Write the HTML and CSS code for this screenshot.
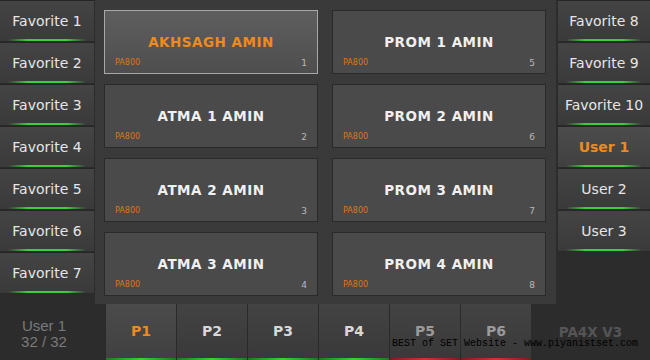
FILE: index.html
```html
<!DOCTYPE html>
<html lang="en">
  <head>
    <meta charset="UTF-8" />
    <title>Favorites</title>
    <link rel="stylesheet" href="styles.css">
  </head>
  <body>
    <div class="screen">
      <div class="side">
        <div class="side-btn">Favorite 1</div>
        <div class="side-btn">Favorite 2</div>
        <div class="side-btn">Favorite 3</div>
        <div class="side-btn">Favorite 4</div>
        <div class="side-btn">Favorite 5</div>
        <div class="side-btn">Favorite 6</div>
        <div class="side-btn">Favorite 7</div>
      </div>

      <div class="panel">
        <div class="card selected">
          <div class="title">AKHSAGH AMIN</div>
          <div class="card-foot"><span class="model">PA800</span><span class="num">1</span></div>
        </div>
        <div class="card">
          <div class="title">PROM 1 AMIN</div>
          <div class="card-foot"><span class="model">PA800</span><span class="num">5</span></div>
        </div>
        <div class="card">
          <div class="title">ATMA 1 AMIN</div>
          <div class="card-foot"><span class="model">PA800</span><span class="num">2</span></div>
        </div>
        <div class="card">
          <div class="title">PROM 2 AMIN</div>
          <div class="card-foot"><span class="model">PA800</span><span class="num">6</span></div>
        </div>
        <div class="card">
          <div class="title">ATMA 2 AMIN</div>
          <div class="card-foot"><span class="model">PA800</span><span class="num">3</span></div>
        </div>
        <div class="card">
          <div class="title">PROM 3 AMIN</div>
          <div class="card-foot"><span class="model">PA800</span><span class="num">7</span></div>
        </div>
        <div class="card">
          <div class="title">ATMA 3 AMIN</div>
          <div class="card-foot"><span class="model">PA800</span><span class="num">4</span></div>
        </div>
        <div class="card">
          <div class="title">PROM 4 AMIN</div>
          <div class="card-foot"><span class="model">PA800</span><span class="num">8</span></div>
        </div>
      </div>

      <div class="side right">
        <div class="side-btn">Favorite 8</div>
        <div class="side-btn">Favorite 9</div>
        <div class="side-btn">Favorite 10</div>
        <div class="side-btn active">User 1</div>
        <div class="side-btn">User 2</div>
        <div class="side-btn">User 3</div>
      </div>

      <div class="bottom">
        <div class="info">User 1<br>32 / 32</div>
        <div class="tabs">
          <div class="tab active">P1</div>
          <div class="tab">P2</div>
          <div class="tab">P3</div>
          <div class="tab">P4</div>
          <div class="tab dim red">P5</div>
          <div class="tab dim red">P6</div>
        </div>
        <div class="brand">PA4X V3</div>
        <div class="watermark">BEST of SET Website - www.piyanistset.com</div>
      </div>
    </div>
  </body>
</html>
```

FILE: styles.css
```css
body {
  margin: 0;
  padding: 0;
  background-color: #2b2b2b;
  font-family: "DejaVu Sans", Verdana, sans-serif;
}

.screen {
  width: 650px;
  height: 360px;
  display: grid;
  grid-template-columns: 94px 462px 94px;
  grid-template-rows: 304px 56px;
  background-color: #2c2c2c;
  overflow: hidden;
}

/* side favourite columns */
.side {
  display: flex;
  flex-direction: column;
}

.side.right {
  margin-left: 2px;
}

.side-btn {
  height: 40px;
  border-top: 1px solid #262626;
  border-bottom: 1px solid #2a2a2a;
  background: linear-gradient(#444444, #3a3a3a);
  color: #e6e6e6;
  font-size: 14px;
  display: flex;
  align-items: center;
  justify-content: center;
  position: relative;
}

.side-btn::after {
  content: "";
  position: absolute;
  left: 8px;
  right: 8px;
  bottom: 0;
  height: 2px;
  background: linear-gradient(90deg, rgba(40, 180, 40, 0), #3ccf3c 25%, #3ccf3c 75%, rgba(40, 180, 40, 0));
}

.side-btn.active {
  background: linear-gradient(#4c4c4c, #404040);
  color: #f08a1c;
  font-weight: bold;
}

/* centre panel */
.panel {
  margin-left: 1px;
  background-color: #3a3a3a;
  padding: 10px 9px 9px 9px;
  display: grid;
  grid-template-columns: 214px 214px;
  grid-template-rows: repeat(4, 64px);
  column-gap: 14px;
  row-gap: 10px;
}

.card {
  box-sizing: border-box;
  background-color: #4a4a4a;
  border: 1px solid #2a2a2a;
  display: flex;
  flex-direction: column;
  justify-content: flex-end;
  position: relative;
}

.card.selected {
  background: linear-gradient(#5e5e5e, #4e4e4e);
  border: 1px solid #a8a8a8;
}

.title {
  position: absolute;
  left: 0;
  right: 0;
  top: 23px;
  text-align: center;
  font-weight: bold;
  font-size: 13.5px;
  letter-spacing: 0.5px;
  color: #f0f0f0;
}

.selected .title {
  color: #f08a1c;
}

.card-foot {
  display: flex;
  justify-content: space-between;
  padding: 0 10px 5px 10px;
  font-size: 8px;
  line-height: 10px;
}

.model {
  color: #d8781a;
}

.num {
  color: #b8b8b8;
  font-size: 9px;
}

/* bottom bar */
.bottom {
  grid-column: 1 / 4;
  display: flex;
  position: relative;
  background-color: #2c2c2c;
}

.info {
  width: 88px;
  padding-top: 14px;
  color: #7a7a7a;
  font-family: "Liberation Sans", Arial, sans-serif;
  font-size: 15px;
  line-height: 16px;
  text-align: center;
  margin-right: 17px;
}

.tabs {
  display: flex;
}

.tab {
  width: 71px;
  background: linear-gradient(#434343, #393939);
  border-left: 1px solid #2a2a2a;
  color: #d8d8d8;
  font-weight: bold;
  font-size: 14px;
  display: flex;
  justify-content: center;
  padding-top: 19px;
  box-sizing: border-box;
  position: relative;
}

.tab::after {
  content: "";
  position: absolute;
  left: 0;
  right: 0;
  bottom: 0;
  height: 2px;
  background: linear-gradient(90deg, #1e7a1e, #3ccf3c 50%, #1e7a1e);
}

.tab.active {
  background: linear-gradient(#4b4b4b, #404040);
  color: #f08a1c;
}

.tab.dim {
  color: #9a9a9a;
}

.tab.red::after {
  background: linear-gradient(90deg, #7a1e1e, #d83030 50%, #7a1e1e);
}

.brand {
  flex: 1;
  color: #555555;
  font-weight: bold;
  font-size: 13.5px;
  text-align: center;
  padding-top: 20px;
}

.watermark {
  position: absolute;
  left: 392px;
  top: 34px;
  font-family: "Liberation Mono", "Courier New", monospace;
  font-size: 10px;
  color: #000000;
  white-space: nowrap;
}
```
